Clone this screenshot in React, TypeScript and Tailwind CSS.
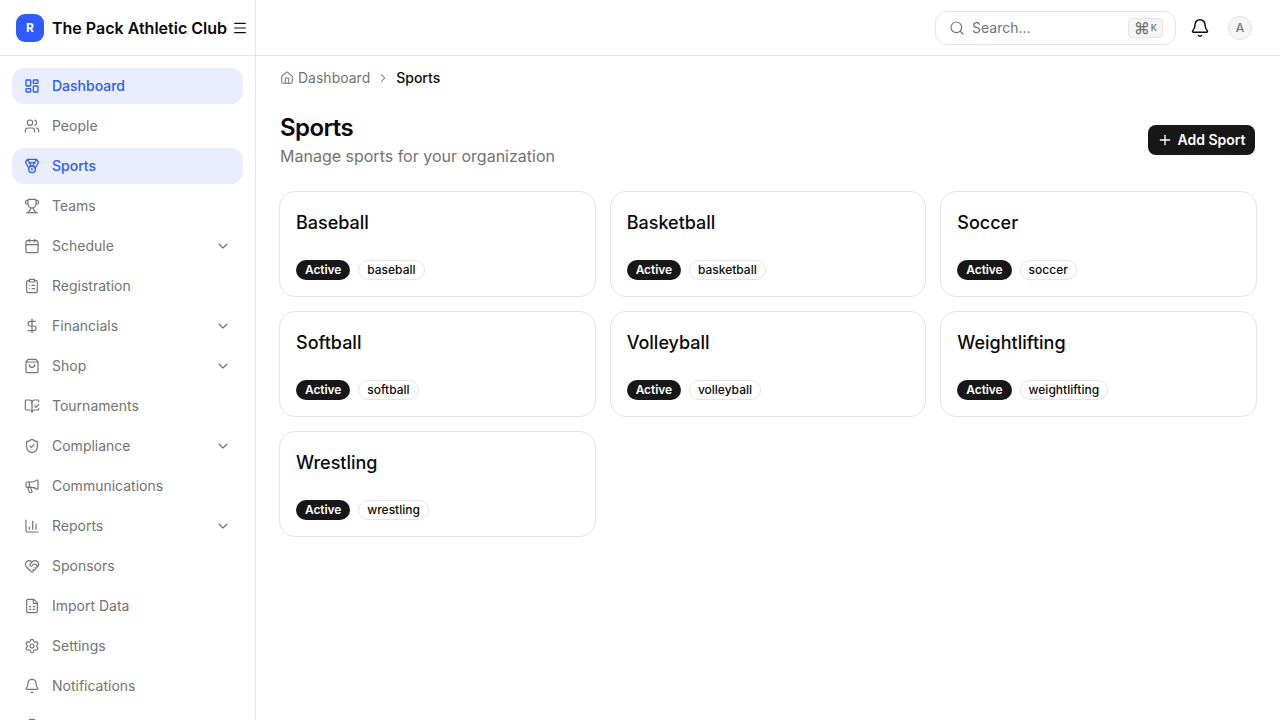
import {
  Bell,
  BookOpenCheck,
  Calendar,
  ChartColumn,
  ChevronDown,
  ChevronRight,
  CircleHelp,
  ClipboardList,
  DollarSign,
  FileSpreadsheet,
  HeartHandshake,
  House,
  LayoutDashboard,
  Medal,
  Megaphone,
  Menu,
  Plus,
  Search,
  Settings,
  ShieldCheck,
  ShoppingBag,
  Trophy,
  Users,
} from "lucide-react";

const navItems = [
  { name: "Dashboard", icon: LayoutDashboard, active: true },
  { name: "People", icon: Users },
  { name: "Sports", icon: Medal, active: true },
  { name: "Teams", icon: Trophy },
  { name: "Schedule", icon: Calendar, sub: true },
  { name: "Registration", icon: ClipboardList },
  { name: "Financials", icon: DollarSign, sub: true },
  { name: "Shop", icon: ShoppingBag, sub: true },
  { name: "Tournaments", icon: BookOpenCheck },
  { name: "Compliance", icon: ShieldCheck, sub: true },
  { name: "Communications", icon: Megaphone },
  { name: "Reports", icon: ChartColumn, sub: true },
  { name: "Sponsors", icon: HeartHandshake },
  { name: "Import Data", icon: FileSpreadsheet },
  { name: "Settings", icon: Settings },
  { name: "Notifications", icon: Bell },
  { name: "Help", icon: CircleHelp },
];

const sports = ["Baseball", "Basketball", "Soccer", "Softball", "Volleyball", "Weightlifting", "Wrestling"];

const App = () => {
  return (
    <div className="flex h-screen overflow-hidden bg-white font-['Inter',sans-serif] text-[#0a0a0a]">
      {/* Sidebar */}
      <aside className="flex h-full w-[256px] shrink-0 flex-col border-r border-[#e5e5e5]">
        <div className="flex h-[56px] shrink-0 items-center border-b border-[#e5e5e5] pl-4">
          <div className="flex h-7 w-7 shrink-0 items-center justify-center rounded-[9px] bg-[#2f5bff] text-xs font-bold text-white">
            R
          </div>
          <span className="ml-2 text-base font-semibold whitespace-nowrap">The Pack Athletic Club</span>
          <Menu className="ml-[5px] h-4 w-4 shrink-0" strokeWidth={1.75} />
        </div>
        <nav className="flex flex-col gap-1 overflow-hidden px-3 pt-3">
          {navItems.map((item) => {
            const Icon = item.icon;
            return (
              <div
                key={item.name}
                className={`flex h-9 shrink-0 items-center rounded-xl pl-3 pr-3 text-sm ${
                  item.active ? "bg-[#e9edfd] font-medium text-[#2f5bff]" : "text-[#737373]"
                }`}
              >
                <Icon className="h-4 w-4 shrink-0" strokeWidth={item.active ? 2 : 1.75} />
                <span className="ml-3 flex-1">{item.name}</span>
                {item.sub && <ChevronDown className="h-4 w-4 shrink-0" strokeWidth={1.75} />}
              </div>
            );
          })}
        </nav>
      </aside>

      <div className="flex min-w-0 flex-1 flex-col">
        {/* Top bar */}
        <header className="flex h-[56px] shrink-0 items-center justify-end border-b border-[#e5e5e5] pr-[28px]">
          <div className="flex h-[34px] w-[241px] items-center rounded-xl border border-[#e5e5e5] pl-[13px] pr-3">
            <Search className="h-4 w-4 text-[#737373]" strokeWidth={1.75} />
            <span className="ml-[7px] flex-1 text-sm text-[#737373]">Search...</span>
            <span className="flex h-5 w-[35px] items-center justify-center gap-px rounded-[4px] border border-[#e5e5e5] bg-[#f5f5f5] text-[9px] font-medium text-[#737373]">
              <span className="text-base leading-none">⌘</span>K
            </span>
          </div>
          <Bell className="ml-[14px] h-5 w-5" strokeWidth={1.75} />
          <div className="ml-[18px] flex h-6 w-6 items-center justify-center rounded-full border border-[#e5e5e5] bg-[#f5f5f5] text-xs font-medium text-[#737373]">
            A
          </div>
        </header>

        <main className="flex-1 overflow-hidden pl-6 pr-6 pt-3">
          {/* Breadcrumb */}
          <div className="flex h-5 items-center text-sm">
            <House className="h-[14px] w-[14px] text-[#737373]" strokeWidth={1.75} />
            <span className="ml-1 text-[#737373]">Dashboard</span>
            <ChevronRight className="ml-[6px] h-[14px] w-[14px] text-[#737373]" strokeWidth={1.75} />
            <span className="ml-[6px] font-medium">Sports</span>
          </div>

          {/* Title row */}
          <div className="mt-[24px] flex items-end justify-between">
            <div>
              <h1 className="text-2xl leading-8 font-semibold tracking-[-0.6px]">Sports</h1>
              <p className="text-base leading-6 text-[#737373]">Manage sports for your organization</p>
            </div>
            <button className="mb-[13px] mr-px flex h-[30px] w-[107px] items-center justify-center gap-1 rounded-lg bg-[#171717] text-sm font-semibold text-white">
              <Plus className="h-4 w-4" strokeWidth={2} />
              Add Sport
            </button>
          </div>

          {/* Cards */}
          <div className="mt-[23px] ml-[-1px] mr-[-1px] grid grid-cols-3 gap-[14px]">
            {sports.map((sport) => (
              <div key={sport} className="flex h-[106px] flex-col rounded-2xl border border-[#e5e5e5] pl-4 pr-4 pt-[17px]">
                <h3 className="text-lg leading-7 font-medium">{sport}</h3>
                <div className="mt-[23px] flex items-center gap-2">
                  <span className="flex h-5 items-center rounded-full bg-[#171717] px-[9px] text-xs font-semibold tracking-[-0.1px] text-white">
                    Active
                  </span>
                  <span className="flex h-5 items-center rounded-full border border-[#e5e5e5] px-2 text-xs font-medium">
                    {sport.toLowerCase()}
                  </span>
                </div>
              </div>
            ))}
          </div>
        </main>
      </div>
    </div>
  );
};

export default App;
